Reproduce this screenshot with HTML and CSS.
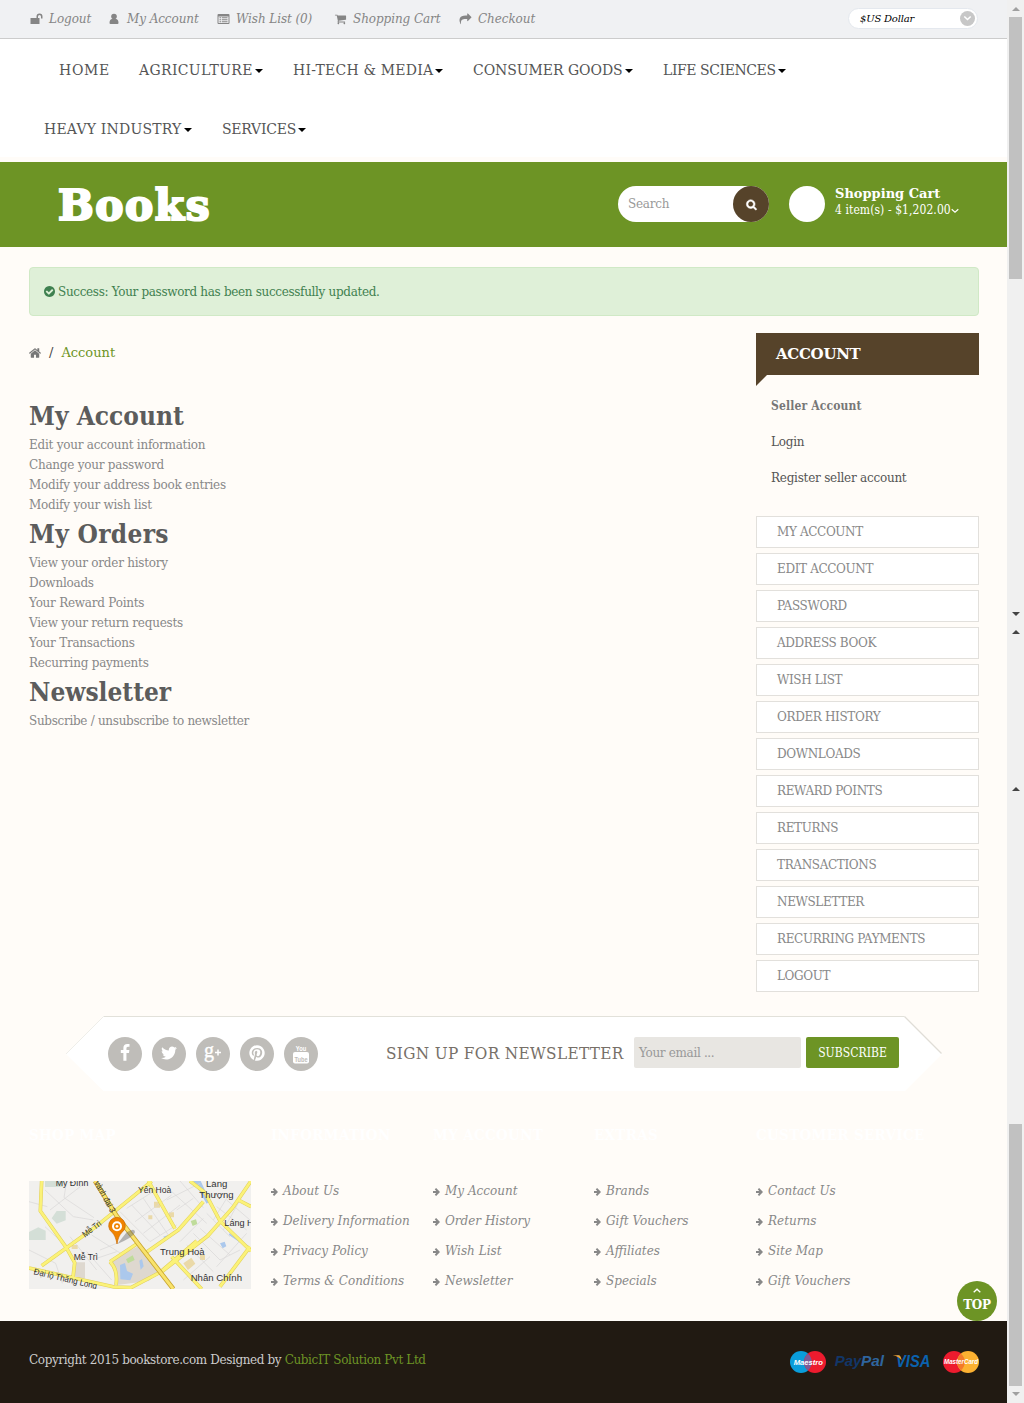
FILE: index.html
```html
<!DOCTYPE html>
<html lang="en">
<head>
<meta charset="utf-8">
<title>My Account</title>
<link rel="stylesheet" href="styles.css">
</head>
<body>
<div class="page">
  <header>
    <div class="topbar">
      <nav class="quick">
        <a class="q1"><svg viewBox="0 0 12 12"><path d="M0 5h6V3.500a3 3 0 0 1 6 0V5.500h-1.500V3.500a1.500 1.500 0 0 0-3 0V5H9v6H0z"/></svg><span>Logout</span></a>
        <a class="q2"><svg viewBox="0 0 12 12"><circle cx="5.500" cy="3.500" r="2.800"/><path d="M1 10q0-4 3-4.300h3q3 .3 3 4.300 0 1-1 1H2q-1 0-1-1z"/></svg><span>My Account</span></a>
        <a class="q3"><svg viewBox="0 0 12 12"><path fill-rule="evenodd" d="M0 2q0-1 1-1h10q1 0 1 1v8q0 1-1 1H1q-1 0-1-1zM1 3.500v6.500h10V3.500zM2 4.300h1.500v1H2zM4.300 4.300H10v1H4.300zM2 6.200h1.500v1H2zM4.300 6.200H10v1H4.300zM2 8.200h1.500v1H2zM4.300 8.200H10v1H4.300z"/></svg><span>Wish List (0)</span></a>
        <a class="q4"><svg viewBox="0 0 1792 1792"><path d="M704 1536q0 52-38 90t-90 38-90-38-38-90 38-90 90-38 90 38 38 90zm896 0q0 52-38 90t-90 38-90-38-38-90 38-90 90-38 90 38 38 90zm128-1088v512q0 24-16.500 42.500t-40.500 21.500l-1044 122q13 60 13 70 0 16-24 64h920q26 0 45 19t19 45-19 45-45 19h-1024q-26 0-45-19t-19-45q0-11 8-31.500t16-36 21.500-40 15.500-29.500l-177-823h-204q-26 0-45-19t-19-45 19-45 45-19h256q16 0 28.500 6.500t19.500 15.500 13 24.500 8 26 5.500 29.500 4.500 26h1201q26 0 45 19t19 45z"/></svg><span>Shopping Cart</span></a>
        <a class="q5"><svg viewBox="0 0 1792 1792"><path d="M1792 640q0 26-19 45l-512 512q-19 19-45 19t-45-19-19-45v-256h-224q-98 0-175.500 6t-154 21.500-133 42.500-105.500 69.500-80 101-48.500 138.500-17.500 181q0 55 5 123 0 6 2.500 23.500t2.500 26.500q0 15-8.500 25t-23.500 10q-16 0-28-17-7-9-13-22t-13.500-30-10.500-24q-127-285-127-451 0-199 53-333 162-403 875-403h224v-256q0-26 19-45t45-19 45 19l512 512q19 19 19 45z"/></svg><span>Checkout</span></a>
      </nav>
      <div class="currency"><span>$US Dollar</span><svg viewBox="0 0 15 15"><circle cx="7.500" cy="7.500" r="7.500" fill="#c7c7c7"/><path d="M4.300 5.500l3.200 3 3.200-3" fill="none" stroke="#fff" stroke-width="1.600"/></svg></div>
    </div>
    <nav class="menu">
      <a class="m1">HOME</a>
      <a class="m2">AGRICULTURE<i></i></a>
      <a class="m3">HI-TECH &amp; MEDIA<i></i></a>
      <a class="m4">CONSUMER GOODS<i></i></a>
      <a class="m5">LIFE SCIENCES<i></i></a>
      <a class="m6">HEAVY INDUSTRY<i></i></a>
      <a class="m7">SERVICES<i></i></a>
    </nav>
    <div class="brandbar">
      <svg class="logo" viewBox="0 0 160 60"><text x="1" y="39.500" textLength="153" lengthAdjust="spacingAndGlyphs">Books</text></svg>
      <div class="search"><span>Search</span><b><svg viewBox="0 0 1792 1792"><path d="M1216 832q0-185-131.500-316.500t-316.500-131.500-316.500 131.500-131.500 316.500 131.500 316.500 316.500 131.500 316.500-131.500 131.500-316.500zm512 832q0 52-38 90t-90 38q-54 0-90-38l-343-342q-179 124-399 124-143 0-273.500-55.500t-225-150-150-225-55.500-273.500 55.500-273.500 150-225 225-150 273.500-55.500 273.500 55.500 225 150 150 225 55.500 273.500q0 220-124 399l343 343q37 37 37 90z" stroke="#fff" stroke-width="90"/></svg></b></div>
      <div class="cart"><b class="disc"></b><div><strong>Shopping Cart</strong><p><span>4 item(s) - $1,202.00</span><svg viewBox="0 0 8 6"><path d="M.7 1.200L4 4.300l3.300-3.100" fill="none" stroke="#fff" stroke-width="1.200"/></svg></p></div></div>
    </div>
  </header>

  <div class="alert"><svg viewBox="128 128 1536 1536"><path d="M1412 734q0-28-18-46l-91-90q-19-19-45-19t-45 19l-408 407-226-226q-19-19-45-19t-45 19l-91 90q-18 18-18 46 0 27 18 45l362 362q19 19 45 19 27 0 46-19l543-543q18-18 18-45zm252 162q0 209-103 385.500t-279.500 279.500-385.500 103-385.500-103-279.500-279.500-103-385.500 103-385.500 279.500-279.500 385.500-103 385.500 103 279.500 279.500 103 385.500z"/></svg><span>Success: Your password has been successfully updated.</span></div>

  <div class="columns">
    <main>
      <div class="crumbs"><svg viewBox="80 250 1632 1300"><path d="M1472 992v480q0 26-19 45t-45 19h-384v-384h-256v384h-384q-26 0-45-19t-19-45v-480q0-1 .5-3t.5-3l575-474 575 474q1 2 1 6zm223-69l-62 74q-8 9-21 11h-3q-13 0-21-7l-692-577-692 577q-12 8-24 7-13-2-21-11l-62-74q-8-10-7-23.500t11-21.500l719-599q32-26 76-26t76 26l244 204v-195q0-14 9-23t23-9h192q14 0 23 9t9 23v408l219 182q10 8 11 21.500t-7 23.500z"/></svg><span class="slash">/</span><a>Account</a></div>
      <h2 class="h-account">My Account</h2>
      <ul><li>Edit your account information</li><li>Change your password</li><li>Modify your address book entries</li><li>Modify your wish list</li></ul>
      <h2 class="h-orders">My Orders</h2>
      <ul><li>View your order history</li><li>Downloads</li><li>Your Reward Points</li><li>View your return requests</li><li>Your Transactions</li><li>Recurring payments</li></ul>
      <h2 class="h-news">Newsletter</h2>
      <ul><li class="subs">Subscribe / unsubscribe to newsletter</li></ul>
    </main>
    <aside>
      <h3><span>ACCOUNT</span></h3>
      <div class="fold"></div>
      <div class="seller"><strong>Seller Account</strong><a>Login</a><a>Register seller account</a></div>
      <nav class="side"><a>MY ACCOUNT</a><a>EDIT ACCOUNT</a><a>PASSWORD</a><a>ADDRESS BOOK</a><a>WISH LIST</a><a>ORDER HISTORY</a><a>DOWNLOADS</a><a>REWARD POINTS</a><a>RETURNS</a><a>TRANSACTIONS</a><a>NEWSLETTER</a><a>RECURRING PAYMENTS</a><a>LOGOUT</a></nav>
    </aside>
  </div>

  <section class="newsletter">
    <svg class="ribbon" viewBox="0 0 876 75"><path d="M0 38L37.500 0H839l37 38-37 37H37.500z" fill="#fff"/><path d="M37.500 .5H838.500" stroke="#e2e1da"/><path d="M0 38L37.500 .5" stroke="#efeee9"/><path d="M838.500 .5L875.500 37.500" stroke="#e0ddd6" stroke-width="1.300"/></svg>
    <div class="ribbon-row">
      <div class="social">
        <a><svg viewBox="0 0 1792 1792"><path d="M1343 12v264h-157q-86 0-116 36t-30 108v189h293l-39 296h-254v759h-306v-759h-255v-296h255v-218q0-186 104-288.500t277-102.500q147 0 228 12z"/></svg></a>
        <a><svg viewBox="0 0 1792 1792"><path d="M1684 408q-67 98-162 167 1 14 1 42 0 130-38 259.500t-115.500 248.500-184.500 210.500-258 146-323 54.500q-271 0-496-145 35 4 78 4 225 0 401-138-105-2-188-64.500t-114-159.500q33 5 61 5 43 0 85-11-112-23-185.500-111.500t-73.500-205.500v-4q68 38 146 41-66-44-105-115t-39-154q0-88 44-163 121 149 294.500 238.500t371.500 99.500q-8-38-8-74 0-134 94.500-228.500t228.500-94.500q140 0 236 102 109-21 205-78-37 115-142 178 93-10 186-50z"/></svg></a>
        <a><svg viewBox="0 0 18 18"><text class="gp" x="0" y="12.500">g</text><path d="M11 8.500h6M14 5.500v6" stroke="#fff" stroke-width="1.500"/></svg></a>
        <a><svg viewBox="0 0 1792 1792"><path d="M1664 896q0 209-103 385.500t-279.500 279.500-385.500 103q-111 0-218-32 59-93 78-164 9-34 54-211 20 39 73 67.500t114 28.500q121 0 216-68.500t147-188.500 52-270q0-114-59.500-214t-172.500-163-255-63q-105 0-196 29t-154.500 77-109 110.500-67 129.500-21.500 134q0 104 40 183t117 111q30 12 38-20 2-7 8-31t8-30q6-23-11-43-51-61-51-151 0-151 104.500-259.500t273.500-108.500q151 0 235.500 82t84.500 213q0 170-68.500 289t-175.500 119q-61 0-98-43.500t-23-104.500q8-35 26.500-93.500t30-103 11.500-75.500q0-50-27-83t-77-33q-62 0-105 57t-43 142q0 73 25 122l-99 418q-17 70-13 177-206-91-333-281t-127-423q0-209 103-385.500t279.500-279.500 385.500-103 385.500 103 279.500 279.500 103 385.500z"/></svg></a>
        <a><svg class="yt" viewBox="0 0 18 20"><text x="3.800" y="7" textLength="10.500" lengthAdjust="spacingAndGlyphs">You</text><rect x="1" y="8" width="16" height="11.500" rx="2"/><text class="tube" x="2.500" y="17.500" textLength="13" lengthAdjust="spacingAndGlyphs">Tube</text></svg></a>
      </div>
      <span class="signup">SIGN UP FOR NEWSLETTER</span>
      <span class="email">Your email ...</span>
      <span class="subscribe">SUBSCRIBE</span>
    </div>
  </section>

  <footer>
    <div class="links">
      <section><h4>SHOP MAP</h4>
        <svg class="map" viewBox="27 33 666 324">
          <rect x="27" y="33" width="666" height="324" fill="#f1f0ee"/>
          <g fill="#d4dfd7"><path d="M75 33h55v18H75zM95 145l15-22h27v28l-27 10zM27 186l28-14 22 10v28H27z"/></g>
          <g fill="#ded8cf"><path d="M165 277h30v48h-30zM275 270l85-44 66 75-40 32-95 12z"/></g>
          <g fill="#ead9a8"><path d="M402 95h18v18h-18zM447 127h15v15h-15zM385 136h12v12h-12zM155 225h18v12h-18zM490 280l24-17 12 18-22 19zM540 255h15v15h-15z"/></g>
          <g fill="#abc8ec"><path d="M300 285l15-6 6 24 18 8-8 20-30-3zM358 272l8-5 5 22-9 10zM600 220l14-5 5 14-11 6zM430 200l12-4 6 8-12 5z"/><path d="M520 33h22l28 60-10 8zM628 190l60 40-3 5-58-40z"/></g>
          <path d="M512 153l16-5 4 14-14 6zM318 268l20-12 6 14-20 10z" fill="#bfdc9a"/>
          <g fill="none" stroke="#d8d7d6" stroke-width="2"><path d="M75 60l85 80 60 10M90 120l110-85M140 33l-8 50 90 60M75 170l70 65 65-60M27 240l80 40 20 60M27 95l55 15M200 245l75 85M150 200l80 100M215 195l95 60M300 125l90 90 80-50M335 105l85 90M370 85l75 110M345 155l110-80M370 190l110-85M320 115l95-60M450 60l110 100M480 33l70 80M440 90l100-50M470 120l50-35M520 190l80 80 60-30M540 175l90 80M500 225l80 80M560 130l70 70M590 110l90 70M620 90l70 60M580 150l40-65M610 180l50-90M480 215l70-70M590 290l90-100M490 330l80-70M240 240l50-20M230 265l60-20"/></g>
          <g fill="none" stroke="#e0cf5b" stroke-width="11" stroke-linejoin="round"><path d="M65 33l-4 90 78 110 25 45-5 45M65 287l160-115 170-138M385 33l80 143M375 250l100-70 75-85M510 33l45 35 45 85 93 90M693 33l-55 80-75 85-135 105-95 50-50-2-256-57M425 303l105-90M455 260l90 97M600 350l90-120M270 275l80-53M270 275q25 25 18 70M655 90l38 20"/></g>
          <g fill="none" stroke="#fbf278" stroke-width="8" stroke-linejoin="round"><path d="M65 33l-4 90 78 110 25 45-5 45M65 287l160-115 170-138M385 33l80 143M375 250l100-70 75-85M510 33l45 35 45 85 93 90M693 33l-55 80-75 85-135 105-95 50-50-2-256-57M425 303l105-90M455 260l90 97M600 350l90-120M270 275l80-53M270 275q25 25 18 70M655 90l38 20"/></g>
          <path d="M225 33l65 105 170 219" fill="none" stroke="#c9a62f" stroke-width="14"/><path d="M225 33l65 105 170 219" fill="none" stroke="#f9e36b" stroke-width="9"/>
          <path d="M292 222l28-35q25-15 25 0-5 15-53 35z" fill="#666" opacity=".45"/>
          <path d="M291 222q-4-25-15-35a25 25 0 1 1 30 0q-11 10-15 35z" fill="#f08300" stroke="#c96a00" stroke-width="2"/><circle cx="291" cy="169" r="15" fill="#fff"/><circle cx="291" cy="169" r="9" fill="#f08300"/><circle cx="291" cy="169" r="4" fill="#fff"/>
          <g class="places"><text x="107" y="47" textLength="98" lengthAdjust="spacingAndGlyphs">Mỹ Đình</text><text x="354" y="70" textLength="100" lengthAdjust="spacingAndGlyphs">Yên Hoà</text><text x="558" y="52" textLength="64" lengthAdjust="spacingAndGlyphs">Láng</text><text x="538" y="85" textLength="103" lengthAdjust="spacingAndGlyphs">Thượng</text><text x="613" y="167" textLength="88" lengthAdjust="spacingAndGlyphs">Láng H</text><text x="420" y="255" textLength="134" lengthAdjust="spacingAndGlyphs">Trung Hoà</text><text x="512" y="332" textLength="154" lengthAdjust="spacingAndGlyphs">Nhân Chính</text><text x="161" y="269" textLength="73" lengthAdjust="spacingAndGlyphs">Mễ Trì</text><text transform="translate(195 203) rotate(-37)" textLength="65" lengthAdjust="spacingAndGlyphs">Mễ Trì</text><text transform="translate(223 38) rotate(62)" textLength="104" lengthAdjust="spacingAndGlyphs">vành đai 3</text><text transform="translate(40 313) rotate(13)" textLength="194" lengthAdjust="spacingAndGlyphs">Đại lộ Thăng Long</text></g>
        </svg>
      </section>
      <section><h4>INFORMATION</h4><ul><li>About Us</li><li>Delivery Information</li><li>Privacy Policy</li><li>Terms &amp; Conditions</li></ul></section>
      <section><h4>MY ACCOUNT</h4><ul><li>My Account</li><li>Order History</li><li>Wish List</li><li>Newsletter</li></ul></section>
      <section><h4>EXTRAS</h4><ul><li>Brands</li><li>Gift Vouchers</li><li>Affiliates</li><li>Specials</li></ul></section>
      <section><h4>CUSTOMER SERVICE</h4><ul><li>Contact Us</li><li>Returns</li><li>Site Map</li><li>Gift Vouchers</li></ul></section>
    </div>
    <a class="top"><svg viewBox="0 0 8 5"><path d="M.7 4.300L4 1.200l3.300 3.100" fill="none" stroke="#fff" stroke-width="1.300"/></svg><span>TOP</span></a>
    <div class="bottom">
      <p>Copyright 2015 bookstore.com Designed by <a>CubicIT Solution Pvt Ltd</a></p>
      <svg class="pay" viewBox="147 270 573 72">
        <circle cx="183" cy="306" r="33" fill="#0a9ddb"/><circle cx="225" cy="306" r="33" fill="#ed1b2e"/><path d="M204 281a33 33 0 0 1 0 50a33 33 0 0 1 0-50" fill="#7b5a98"/>
        <circle cx="642" cy="306" r="33" fill="#ed1b2e"/><circle cx="684" cy="306" r="33" fill="#fcb131"/><path d="M663 281a33 33 0 0 1 0 50a33 33 0 0 1 0-50" fill="#f37a2a"/>
        <g class="marks"><text x="161" y="314" font-size="24" fill="#fff" textLength="88" lengthAdjust="spacingAndGlyphs">Maestro</text><text x="612" y="313" font-size="22" fill="#fff" textLength="102" lengthAdjust="spacingAndGlyphs">MasterCard</text><text x="284" y="317" font-size="43" fill="#123668" textLength="80" lengthAdjust="spacingAndGlyphs">Pay</text><text x="363" y="317" font-size="43" fill="#2f659e" textLength="69" lengthAdjust="spacingAndGlyphs">Pal</text><text x="468" y="321" font-size="49" fill="#0b62ae" textLength="103" lengthAdjust="spacingAndGlyphs">VISA</text></g><path d="M458 286h17q8 0 10 16-7-12-27-16z" fill="#f0a12e"/>
      </svg>
    </div>
  </footer>
</div>
<div class="scroll">
  <i class="up faint"></i><b class="thumb-a"></b><i class="down s1"></i><i class="up s2"></i><i class="up s3"></i><b class="thumb-b"></b><i class="down faint s4"></i>
</div>
</body>
</html>
```
FILE: styles.css
```css
* { box-sizing: border-box; }
body { margin: 0; width: 1024px; height: 1403px; display: flex; overflow: hidden; background: #fffcf8; color: #888; font: 12px/20px "DejaVu Serif", serif; letter-spacing: -0.24px; }
h2, h3, h4, p, ul { margin: 0; padding: 0; }
ul { list-style: none; }
svg { display: block; flex: none; fill: currentColor; overflow: visible; }
a, span { white-space: nowrap; }
.page { width: 1007px; height: 1403px; flex: none; }

.topbar { height: 39px; background: #f0f1f3; border-bottom: 1px solid #ccc; display: flex; justify-content: space-between; padding: 0 29px 0 30px; }
.quick { display: flex; font-style: italic; letter-spacing: -0.08px; }
.quick a { display: flex; align-items: center; gap: 6px; height: 37px; color: #858585; }
.quick svg { width: 13px; height: 12px; }
.q1 { width: 78px; }
.q2 { width: 109px; }
.q3 { width: 117px; }
.q4 { width: 125px; }
.currency { width: 130px; height: 21px; margin-top: 8px; border: 1px solid #e4e8ee; border-radius: 11px; background: #fff; display: flex; align-items: center; justify-content: space-between; padding: 0 2px 0 11px; font-size: 10px; font-style: italic; color: #000; letter-spacing: -0.2px; }
.currency svg { width: 15px; height: 15px; }

.menu { height: 118px; background: #fff; display: flex; flex-wrap: wrap; padding: 1px 0 0 59px; font-size: 14px; color: #555; }
.menu a { height: 59px; display: flex; align-items: center; gap: 2px; }
.menu i { border: 4px solid transparent; border-top-color: #000; border-bottom: 0; margin-top: 2px; }
.m1 { width: 80px; letter-spacing: .7px; }
.m2 { width: 154px; letter-spacing: .35px; }
.m3 { width: 180px; letter-spacing: .2px; }
.m4 { width: 190px; letter-spacing: -.05px; }
.m5 { width: 300px; letter-spacing: -.42px; }
.m6 { width: 178px; margin-left: -15px; letter-spacing: .2px; }
.m7 { letter-spacing: -.25px; }

.brandbar { height: 85px; margin-top: 5px; background: #6d9425; color: #fff; display: flex; align-items: flex-start; padding: 24px 0 0 57px; }
.logo { width: 160px; height: 60px; margin-top: -6px; font: bold 42px "DejaVu Serif", serif; letter-spacing: 1.5px; }
.logo text { stroke: #fff; stroke-width: 2.200px; }
.search { width: 151px; height: 36px; margin-left: 401px; background: #fff; border-radius: 18px; display: flex; justify-content: space-between; align-items: center; padding-left: 10px; color: #999; }
.search b { width: 36px; height: 36px; border-radius: 50%; background: #56432a; color: #fff; display: grid; place-items: center; }
.search svg { width: 11px; height: 11px; }
.cart { display: flex; gap: 10px; margin-left: 20px; line-height: 17px; }
.disc { width: 36px; height: 36px; border-radius: 50%; background: #fff; }
.cart strong { display: block; font-size: 13px; line-height: 16px; letter-spacing: 0; }
.cart p { display: flex; align-items: center; font-family: "DejaVu Serif Condensed", "DejaVu Serif", serif; letter-spacing: .08px; }
.cart svg { width: 8px; height: 6px; }

.alert { margin: 20px 28px 0 29px; height: 49px; border: 1px solid #d0e9c6; border-radius: 4px; background: #dff0d8; color: #3f8150; display: flex; align-items: center; gap: 3px; padding-left: 14px; letter-spacing: -.33px; }
.alert svg { width: 11px; height: 11px; }

.columns { display: flex; justify-content: space-between; padding: 17px 28px 0 29px; height: 700px; }
.crumbs { display: flex; align-items: center; height: 39px; color: #777; font-size: 13px; letter-spacing: 0; }
.crumbs svg { width: 12px; height: 10px; }
.slash { margin: 0 8px; color: #444; }
.crumbs a { color: #6d9425; }
h2 { font: bold 26px/38px "DejaVu Serif Condensed", "DejaVu Serif", serif; height: 38px; color: #5c5c5c; letter-spacing: 0; }
.h-account { margin-top: 25px; }
.h-orders { letter-spacing: .3px; }
.subs { letter-spacing: -.3px; }
aside { width: 223px; }
h3 { height: 42px; background: #56432a; color: #fff; font-size: 15px; line-height: 42px; padding-left: 20px; letter-spacing: -.3px; }
.fold { width: 11px; height: 11px; background: #56432a; clip-path: polygon(0 0, 100% 0, 0 100%); }
.seller { padding: 2px 0 0 15px; height: 130px; display: flex; flex-direction: column; line-height: 36px; color: #555; }
.seller strong { color: #777; font-family: "DejaVu Serif Condensed", "DejaVu Serif", serif; letter-spacing: .15px; }
.side { display: flex; flex-direction: column; gap: 5px; letter-spacing: -.36px; }
.side a { height: 32px; border: 1px solid #e2e0dc; background: #fff; line-height: 30px; padding-left: 20px; color: #888; }

.newsletter { width: 876px; height: 75px; margin-left: 66px; display: grid; }
.ribbon, .ribbon-row { grid-area: 1 / 1; }
.ribbon { width: 876px; height: 75px; }
.ribbon-row { display: flex; align-items: flex-start; padding: 21px 0 0 42px; }
.social { display: flex; gap: 10px; width: 278px; }
.social a { width: 34px; height: 34px; border-radius: 50%; background: #bfbdb9; color: #fff; display: grid; place-items: center; }
.social svg { width: 18px; height: 18px; margin-top: -2px; }
.social .yt { height: 20px; margin-top: 0; }
.gp { font: 20px "Liberation Serif", serif; stroke: #fff; stroke-width: .4px; }
.yt text { font: bold 8px "Liberation Sans", sans-serif; letter-spacing: 0; }
.yt .tube { fill: #bfbdb9; }
.signup { width: 248px; font-family: "DejaVu Serif Condensed", "DejaVu Serif", serif; font-size: 17px; line-height: 32px; color: #777068; letter-spacing: .35px; }
.email { width: 167px; height: 31px; border-radius: 2px; background: #e8e6e2; line-height: 32px; padding-left: 5px; color: #999; letter-spacing: -.33px; }
.subscribe { width: 93px; height: 31px; margin-left: 5px; border-radius: 2px; background: #6d9425; color: #fff; line-height: 32px; text-align: center; font-family: "DejaVu Serif Condensed", "DejaVu Serif", serif; letter-spacing: .05px; }

.links { height: 230px; padding: 34px 0 0 29px; display: grid; grid-template-columns: 242px 162px 161px 162px 222px; }
h4 { height: 20px; font: bold 15px/20px "DejaVu Serif Condensed", "DejaVu Serif", serif; letter-spacing: .3px; white-space: nowrap; color: #fff; margin-bottom: 36px; }
.map { width: 222px; height: 108px; overflow: hidden; }
.places { font: 26px "Liberation Sans", sans-serif; fill: #333; letter-spacing: 0; }
.links li { height: 30px; line-height: 20px; font-style: italic; color: #888; white-space: nowrap; display: flex; align-items: flex-start; gap: 5px; letter-spacing: 0; }
.links li::before { content: ""; width: 7px; height: 8px; margin-top: 7px; background: #888; clip-path: polygon(0 38%, 45% 38%, 25% 15%, 45% 0, 100% 50%, 45% 100%, 25% 85%, 45% 62%, 0 62%); }
.top { display: flex; flex-direction: column; align-items: center; width: 40px; height: 40px; margin: -40px 0 0 957px; border-radius: 50%; background: #6d9425; color: #fff; font-weight: bold; line-height: 16px; padding-top: 7px; }
.top svg { width: 8px; height: 5px; margin-bottom: 4px; }
.bottom { height: 82px; background: #211a12; color: #ccc; display: flex; justify-content: space-between; padding: 29px 27px 0 29px; letter-spacing: -.38px; }
.bottom a { color: #6d9425; }
.pay { width: 191px; height: 24px; }
.marks { font-family: "Liberation Sans", sans-serif; font-weight: bold; font-style: italic; letter-spacing: 0; }

.scroll { width: 17px; height: 1403px; background: #f0f0f0; display: flex; flex-direction: column; align-items: center; padding-top: 7px; }
.scroll b { width: 13px; background: #c1c1c1; }
.scroll i { border: 4px solid transparent; }
.scroll .up { border-bottom-color: #444; border-top: 0; }
.scroll .down { border-top-color: #444; border-bottom: 0; }
.scroll .up.faint { border-bottom-color: #a0a0a0; }
.scroll .down.faint { border-top-color: #a0a0a0; }
.thumb-a { height: 262px; margin-top: 6px; }
.s1 { margin-top: 333px; }
.s2 { margin-top: 14px; }
.s3 { margin-top: 153px; }
.thumb-b { height: 262px; margin-top: 333px; }
.s4 { margin-top: 6px; }
```
